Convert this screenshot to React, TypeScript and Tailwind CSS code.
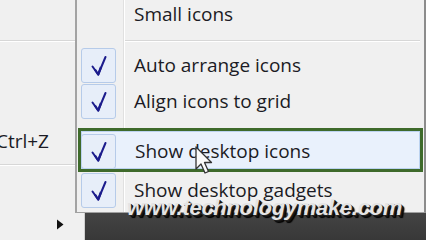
import React from "react";

const Check = () => (
  <svg width="17" height="21" viewBox="0 0 17 21" fill="none">
    <path d="M2.5 11.5 L8.2 19.5 L15.5 2" stroke="#1c1c8c" strokeWidth="2" strokeLinejoin="round" strokeLinecap="round" />
    <path d="M5 14.5 L8.2 19.5 L11 12" stroke="#1c1c8c" strokeWidth="2.2" strokeLinejoin="round" />
  </svg>
);

const Box = () => (
  <div className="w-[35px] h-[35px] rounded-[3px] border border-[#b6cbe9] bg-[#e7eef9] flex items-center justify-center">
    <Check />
  </div>
);

const Item = ({ label, checked }: { label: string; checked?: boolean }) => (
  <div className="h-[36px] flex items-center">
    <div className="w-[46px] h-full flex items-center pl-[4px]">{checked ? <Box /> : null}</div>
    <div className="pl-[11px] text-[#1b1b24] leading-none">{label}</div>
  </div>
);

const Sep = () => (
  <div className="flex flex-col">
    <div className="h-px bg-[#d7d7d7]" />
    <div className="h-px bg-white" />
  </div>
);

export default function App() {
  return (
    <div
      className="relative w-[426px] h-[240px] overflow-hidden bg-[#f0f0f0] flex"
      style={{ fontFamily: '"Open Sans", "Noto Sans", sans-serif' }}
    >
      {/* parent menu */}
      <div className="w-[85px] h-full bg-[#f0f0f0] flex flex-col text-[19px] text-[#1b1b24] border-r border-[#d0d0d0]">
        <div className="h-[40px]" />
        <Sep />
        <div className="h-[89px]" />
        <div className="h-[20px] flex items-center justify-end pr-[35px] leading-none whitespace-nowrap">Ctrl+Z</div>
        <div className="h-[13px]" />
        <Sep />
        <div className="h-[53px]" />
        <div className="flex justify-end pr-[20px]">
          <svg width="8" height="11" viewBox="0 0 8 11">
            <path d="M1 0.5 L7.5 5.5 L1 10.5 Z" fill="#111" />
          </svg>
        </div>
      </div>
      {/* right area */}
      <div className="flex-1 flex flex-col">
        <div className="h-[212px] bg-[#f0f0f0]" />
        <div className="flex-1 bg-gradient-to-b from-[#444] to-[#383838]" />
      </div>

      {/* submenu */}
      <div className="absolute left-[75px] top-0 w-[351px] h-[213px] bg-[#f0f0f0] border-l-2 border-r-2 border-b border-l-[#a3a3a3] border-r-[#8c8c8c] border-b-[#a0a0a0] text-[19px] flex">
        <div className="relative flex-1 flex flex-col">
          {/* gutter line */}
          <div className="absolute left-[46px] top-0 bottom-0 w-[2px] flex">
            <div className="w-px bg-[#e0e0e0]" />
            <div className="w-px bg-white" />
          </div>
          <div className="h-[28px] flex items-center">
            <div className="w-[46px]" />
            <div className="pl-[11px] text-[#1b1b24] leading-none">Small icons</div>
          </div>
          <div className="h-[12px]" />
          <div className="pl-[48px] pr-[4px]">
            <Sep />
          </div>
          <div className="h-[5px]" />
          <Item label="Auto arrange icons" checked />
          <Item label="Align icons to grid" checked />
          <div className="h-[9px]" />
          <div className="relative h-[44px] ml-px mr-[1px] border-[3px] border-[#3e6a2b] bg-[#e9f1fc] flex items-center">
            <div className="absolute inset-0 border border-[#bcd3f0]" />
            <div className="w-[42px] h-full flex items-center pt-[3px]">
              <Box />
            </div>
            <div className="pl-[12px] pt-[3px] text-[#1b1b24] leading-none">Show desktop icons</div>
          </div>
          <Item label="Show desktop gadgets" checked />
        </div>
      </div>

      {/* watermark */}
      <div
        className="absolute left-[127px] top-[197px] text-[22px] font-bold italic text-[#e4e4e4] tracking-[-0.3px] leading-none"
        style={{
          fontFamily: '"Liberation Sans", Arial, sans-serif',
          textShadow: "1px 1px 0 #222, 2px 2px 0 #111, 3px 3px 1px #000",
        }}
      >
        www.technologymake.com
      </div>

      {/* cursor */}
      <svg className="absolute left-[195px] top-[146px]" width="20" height="30" viewBox="0 0 20 30">
        <path
          d="M1 1 L1 23 L6 18 L10 27 L13.5 25.5 L9.5 16.5 L16.5 16.5 Z"
          fill="#fafafa"
          stroke="#333"
          strokeWidth="1.3"
          strokeLinejoin="round"
        />
      </svg>
    </div>
  );
}
